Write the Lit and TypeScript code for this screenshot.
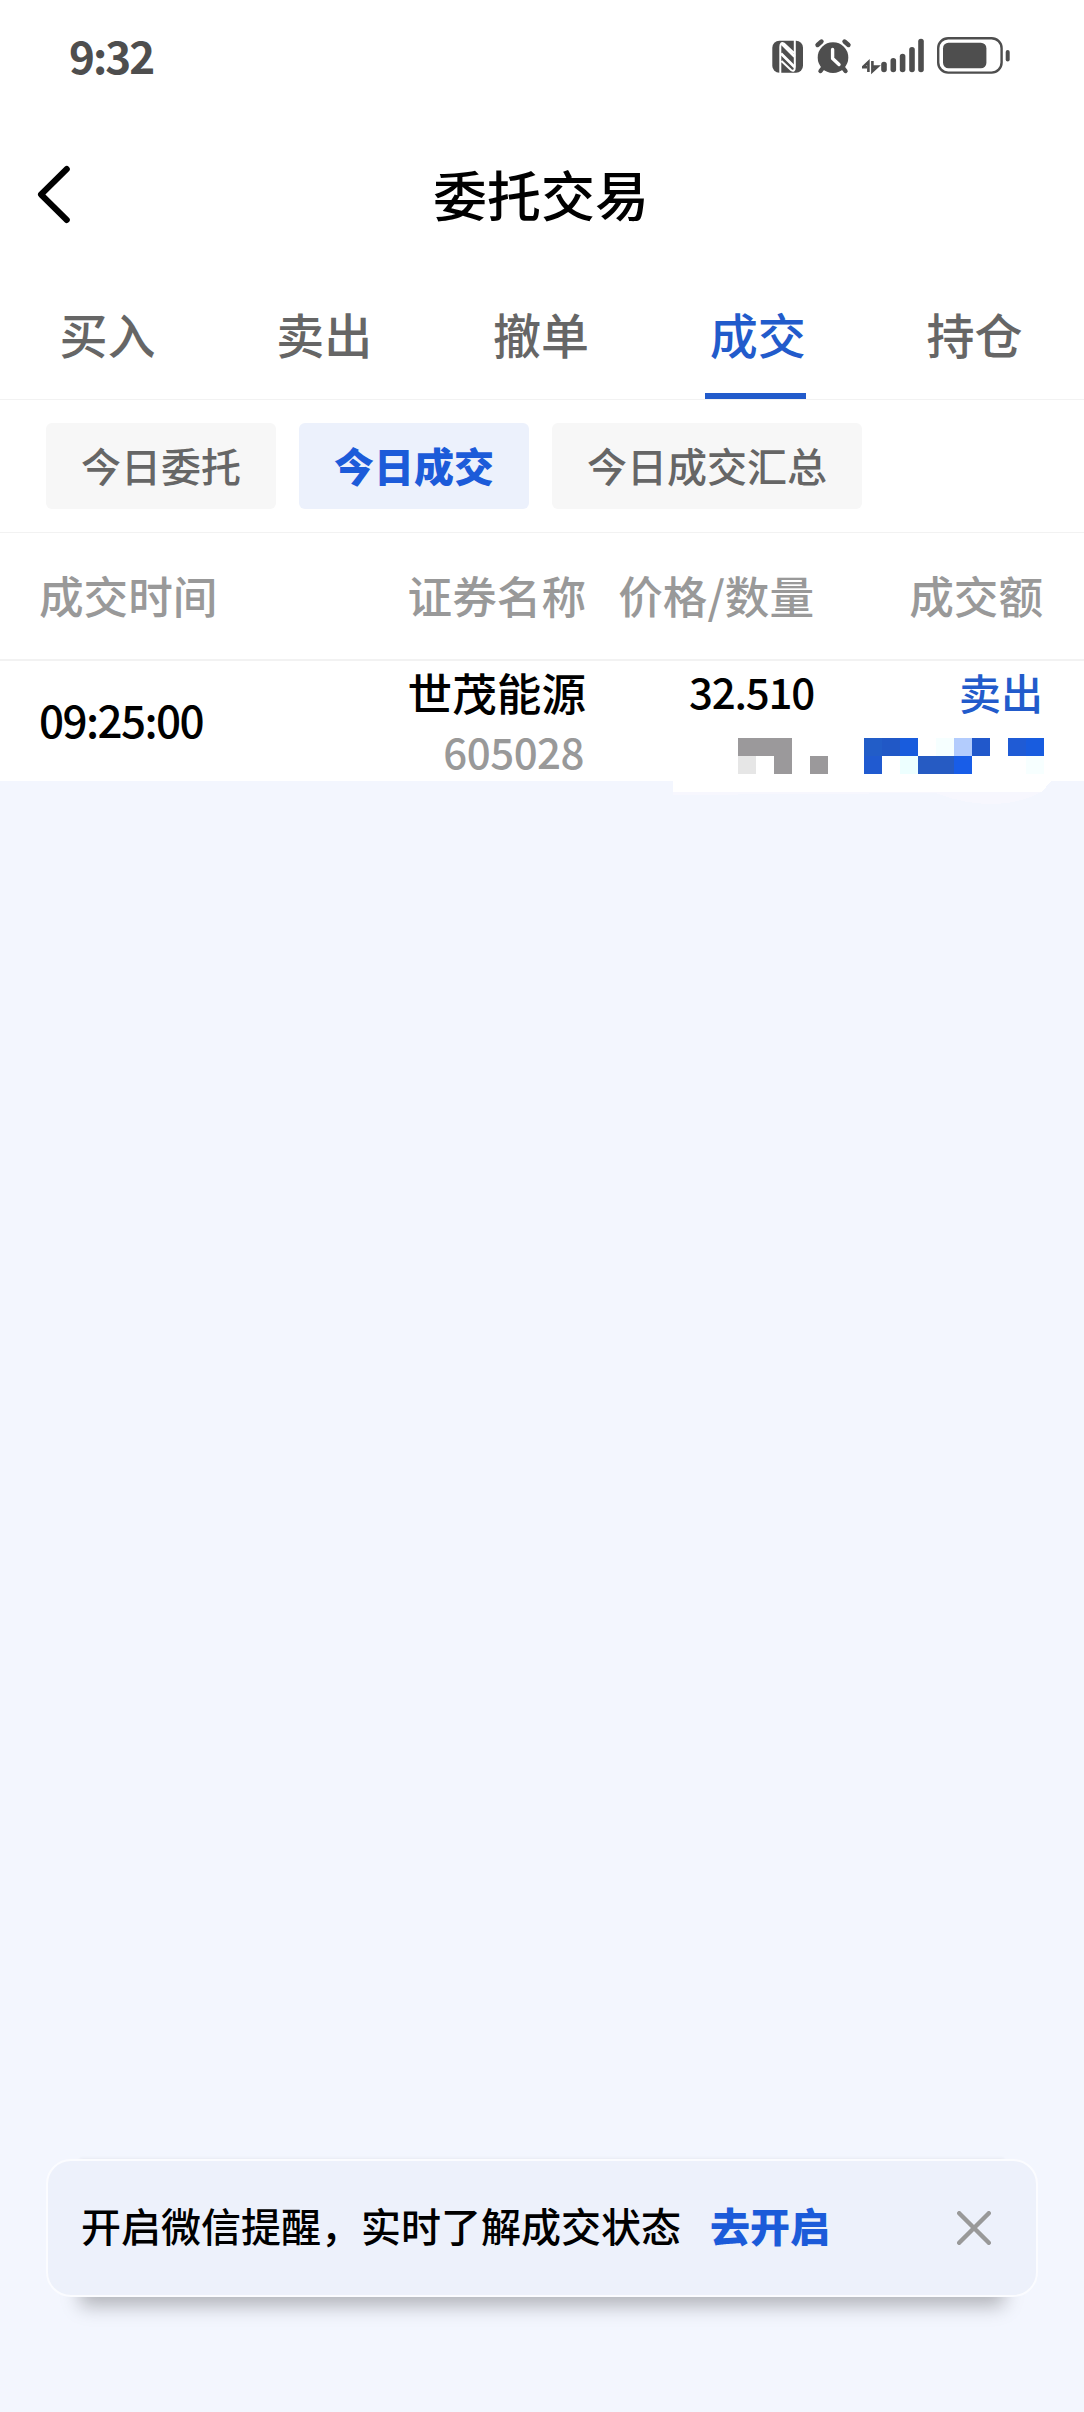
import { LitElement, html, svg, css } from "lit";
import { customElement, property } from "lit/decorators.js";
import { classMap } from "lit/directives/class-map.js";

@customElement("status-bar")
class StatusBar extends LitElement {
  static styles = css`
    :host {
      display: flex;
      box-sizing: border-box;
      height: 114px;
      padding: 0 74px 0 69px;
      justify-content: space-between;
      align-items: flex-start;
      color: #4e4e4e;
    }
    .clock {
      padding-top: 25px;
      font-size: 44px;
      line-height: 60px;
      font-weight: 700;
      letter-spacing: -2px;
    }
    .icons {
      display: flex;
      padding-top: 34px;
    }
    svg {
      display: block;
    }
  `;

  render() {
    const bars = [
      [14, 27.7],
      [23.3, 24],
      [32.6, 19.7],
      [42, 13],
      [51, 4.7],
    ];
    return html`
      <div class="clock">9:32</div>
      <div class="icons">
        <svg width="42" height="44" viewBox="770 34 42 44">
          <rect x="772.3" y="40.7" width="30.7" height="32" rx="7" fill="#4e4e4e" />
          <path
            d="M780.3 73V47Q780.3 41.5 784 43.6L794 53M794.8 40V67Q794.8 72.4 791 70L781.5 61"
            fill="none"
            stroke="#fff"
            stroke-width="2"
          />
          <path d="M781.5 43.5L794.5 56.5M781 53.5L794.5 67" stroke="#fff" stroke-width="2.8" />
        </svg>
        <svg width="50" height="44" viewBox="812 34 50 44">
          <g stroke="#4e4e4e" stroke-width="4.4" stroke-linecap="round">
            <path d="M817.5 45L821.5 41.5M848.5 45L844.5 41.5M820.5 71L824 66.5M845.5 71L842 66.5" />
          </g>
          <circle cx="833" cy="57.6" r="15.3" fill="#4e4e4e" />
          <path
            d="M832.6 49.5V58.5L839 64.5"
            fill="none"
            stroke="#fff"
            stroke-width="3.4"
            stroke-linecap="round"
            stroke-linejoin="round"
          />
        </svg>
        <svg width="70" height="44" viewBox="-8 0 70 44">
          <path
            d="M-1.6 38V28L-7.2 33.2H-3M2.4 27V37.4L7.6 32.6H3.6"
            fill="none"
            stroke="#4e4e4e"
            stroke-width="2.6"
          />
          ${bars.map(
            ([x, y]) =>
              svg`<rect x=${x - 2.8} y=${y} width="5.6" height=${38.3 - y} rx="2.8" fill="#4e4e4e" />`
          )}
        </svg>
        <svg width="78" height="44" viewBox="932 34 78 44">
          <rect x="938.2" y="38.2" width="63.4" height="34.4" rx="10" fill="none" stroke="#4e4e4e" stroke-width="2.4" />
          <rect x="943" y="42.7" width="43.4" height="25.6" rx="5.5" fill="#4e4e4e" />
          <rect x="1005.7" y="50" width="4" height="11.4" rx="2" fill="#4e4e4e" />
        </svg>
      </div>
    `;
  }
}

@customElement("title-bar")
class TitleBar extends LitElement {
  @property() heading = "";

  static styles = css`
    :host {
      display: grid;
      grid-template-columns: 120px 1fr 120px;
      height: 162px;
      align-items: center;
    }
    .back {
      display: block;
      margin-left: 30px;
    }
    .title {
      text-align: center;
      font-size: 54px;
      line-height: 80px;
      font-weight: 500;
      color: #000;
      padding: 0 2px 3px 0;
    }
  `;

  render() {
    return html`
      <svg class="back" width="50" height="70" viewBox="30 160 50 70">
        <path
          d="M66.8 169L41 194.5L66.8 220"
          fill="none"
          stroke="#000"
          stroke-width="6"
          stroke-linecap="round"
          stroke-linejoin="round"
        />
      </svg>
      <div class="title">${this.heading}</div>
    `;
  }
}

@customElement("trade-tabs")
class TradeTabs extends LitElement {
  @property({ type: Array }) tabs: string[] = [];
  @property() active = "";

  static styles = css`
    :host {
      display: grid;
      box-sizing: border-box;
      grid-template-columns: repeat(5, 1fr);
      height: 124px;
      border-bottom: 1px solid #f2f2f2;
    }
    .tab {
      display: flex;
      flex-direction: column;
      align-items: center;
      justify-content: space-between;
      font-size: 48px;
      line-height: 72px;
      font-weight: 500;
      color: #666;
      padding-top: 21px;
      padding-right: 2px;
    }
    .active {
      color: #225bcb;
    }
    .mark {
      width: 101px;
      height: 6px;
      margin-right: 4px;
    }
    .active .mark {
      background: #225bcb;
    }
  `;

  render() {
    return this.tabs.map(
      (t) => html`
        <div class=${classMap({ tab: true, active: t === this.active })}>
          <span>${t}</span>
          <span class="mark"></span>
        </div>
      `
    );
  }
}

@customElement("filter-chips")
class FilterChips extends LitElement {
  @property({ type: Array }) chips: string[] = [];
  @property() active = "";

  static styles = css`
    :host {
      display: flex;
      box-sizing: border-box;
      gap: 23px;
      height: 133px;
      padding: 23px 46px 0;
      border-bottom: 1px solid #f2f2f2;
    }
    .chip {
      box-sizing: border-box;
      height: 86px;
      padding: 11px 35px 0;
      border-radius: 6px;
      background: #f7f7f7;
      color: #666;
      font-size: 40px;
      line-height: 62px;
      font-weight: 500;
    }
    .active {
      background: #ecf1fc;
      color: #1c5bd9;
      font-weight: 900;
    }
  `;

  render() {
    return this.chips.map(
      (c) => html`<div class=${classMap({ chip: true, active: c === this.active })}>${c}</div>`
    );
  }
}

/* Pixelated cover over private figures, in 18px cells. */
const CELLS: [number, number, number, string][] = [
  [738, 738, 54, "#9b999b"],
  [738, 756, 18, "#e6e6e6"],
  [774, 756, 18, "#9b999b"],
  [810, 756, 18, "#9b999b"],
  [864, 738, 18, "#225dc8"],
  [882, 738, 18, "#2158c6"],
  [900, 738, 18, "#185cdd"],
  [936, 738, 18, "#f6ffff"],
  [954, 738, 18, "#b3ccfd"],
  [972, 738, 18, "#2158cb"],
  [1008, 738, 18, "#1f5bd5"],
  [1026, 738, 18, "#185cdf"],
  [864, 756, 18, "#205ad0"],
  [900, 756, 18, "#edffff"],
  [918, 756, 36, "#265bc3"],
  [954, 756, 18, "#185de8"],
  [1026, 756, 18, "#f7ffff"],
];

@customElement("deal-table")
class DealTable extends LitElement {
  static styles = css`
    :host {
      display: block;
      position: relative;
    }
    .head,
    .row {
      display: grid;
      box-sizing: border-box;
      grid-template-columns: 347px 200px 228px 229px;
      padding: 0 40px 0 39px;
      font-weight: 500;
    }
    .head {
      height: 128px;
      border-bottom: 2px solid #f2f2f2;
      padding-top: 28px;
      font-size: 44.6px;
      line-height: 68px;
      color: #999;
    }
    .row {
      height: 120px;
      background: #fff;
      color: #000;
    }
    .num {
      text-align: right;
    }
    .time {
      padding-top: 26px;
      font-size: 44px;
      line-height: 64px;
      letter-spacing: -1.6px;
    }
    .name {
      font-size: 44.6px;
      line-height: 60px;
      padding-top: 1px;
    }
    .code {
      font-size: 42px;
      line-height: 58px;
      color: #999;
      letter-spacing: -0.5px;
      padding-right: 2px;
    }
    .price {
      font-size: 42px;
      line-height: 60px;
      letter-spacing: -1.2px;
    }
    .side {
      font-size: 42px;
      line-height: 60px;
      padding-top: 1px;
      color: #225bcb;
    }
    .cover {
      position: absolute;
      left: 673px;
      top: 198px;
    }
  `;

  render() {
    return html`
      <div class="head">
        <div>成交时间</div>
        <div class="num">证券名称</div>
        <div class="num">价格/数量</div>
        <div class="num">成交额</div>
      </div>
      <div class="row">
        <div class="time">09:25:00</div>
        <div class="num">
          <div class="name">世茂能源</div>
          <div class="code">605028</div>
        </div>
        <div class="num price">32.510</div>
        <div class="num side">卖出</div>
      </div>
      <svg class="cover" width="380" height="75" viewBox="673 731 380 75" shape-rendering="crispEdges">
        <path d="M673 781H1051L1041 792Q1020 804 990 804Q965 804 935 793L673 795Z" fill="#f7f7fe" />
        <path d="M673 731H1051V781L1042 792H673Z" fill="#fff" />
        ${CELLS.map(
          ([x, y, w, c]) => svg`<rect x=${x} y=${y} width=${w} height="18" fill=${c} />`
        )}
      </svg>
    `;
  }
}

@customElement("remind-banner")
class RemindBanner extends LitElement {
  static styles = css`
    :host {
      display: flex;
      box-sizing: border-box;
      align-items: center;
      height: 138px;
      margin: 0 46px 115px;
      padding: 0 45px 0 33px;
      border: 2px solid #fbfcff;
      border-radius: 25px;
      background: #edf1fb;
      box-shadow:
        0 43px 18px -34px rgba(0, 0, 0, 0.27),
        0 -35px 3px -34px rgba(0, 0, 0, 0.05);
      font-size: 40px;
      line-height: 60px;
      font-weight: 500;
      color: #000;
    }
    .text,
    .link {
      padding-bottom: 6px;
    }
    .link {
      margin-left: 29px;
      font-weight: 900;
      color: #1c5bd9;
    }
    .close {
      margin-left: auto;
    }
  `;

  render() {
    return html`
      <span class="text">开启微信提醒，实时了解成交状态</span>
      <span class="link">去开启</span>
      <svg class="close" width="34" height="34" viewBox="0 0 34 34">
        <path d="M2.2 2.2L31.8 31.8M31.8 2.2L2.2 31.8" stroke="#999" stroke-width="4.4" stroke-linecap="round" />
      </svg>
    `;
  }
}

@customElement("app-root")
class AppRoot extends LitElement {
  static styles = css`
    :host {
      display: flex;
      flex-direction: column;
      width: 1084px;
      height: 2412px;
      background: #f3f6fe;
      font-family: "Noto Sans CJK SC", sans-serif;
      white-space: nowrap;
    }
    .top {
      background: #fff;
    }
    .space {
      flex: 1;
    }
  `;

  render() {
    return html`
      <div class="top">
        <status-bar></status-bar>
        <title-bar heading="委托交易"></title-bar>
        <trade-tabs .tabs=${["买入", "卖出", "撤单", "成交", "持仓"]} active="成交"></trade-tabs>
        <filter-chips .chips=${["今日委托", "今日成交", "今日成交汇总"]} active="今日成交"></filter-chips>
        <deal-table></deal-table>
      </div>
      <div class="space"></div>
      <remind-banner></remind-banner>
    `;
  }
}
